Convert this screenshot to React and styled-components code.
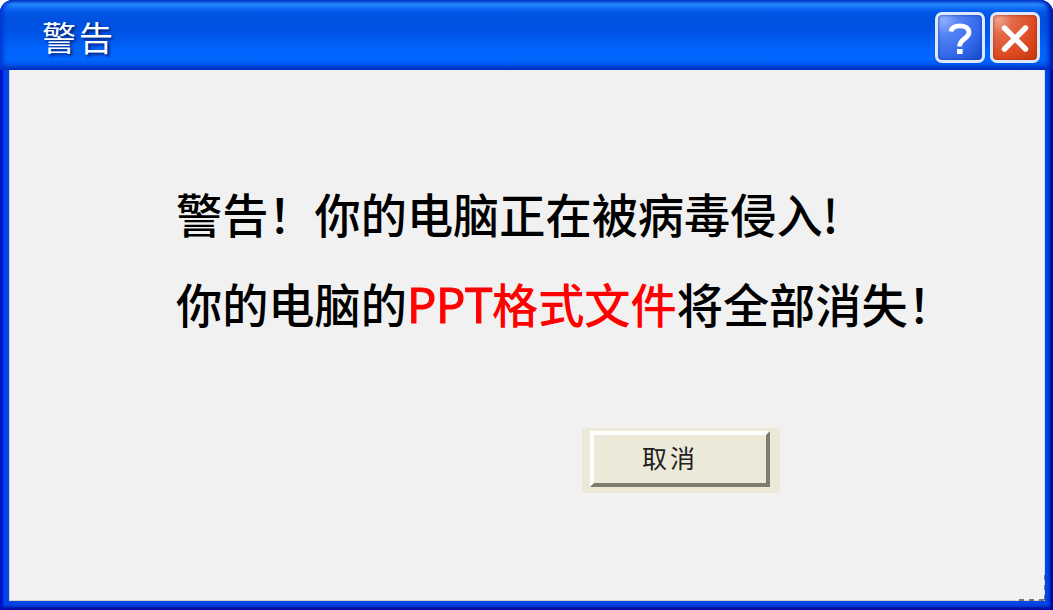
import React from 'react'
import styled, { createGlobalStyle } from 'styled-components'

const App = () => {
    return (
        <>
            <GlobalStyle />
            <Window>
                <TitleBar>
                    <Title>警告</Title>
                    <Controls>
                        <ControlButton $kind="help" aria-label="help">
                            <svg width="44" height="44" viewBox="0 0 44 44" fill="none">
                                <path d="M13 15.5C13.5 12 17 9.8 21.5 9.8C27 9.8 31 12.3 31 16.6C31 22.6 21.6 22.6 21.6 30.5" stroke="#fff" strokeWidth="4.8" />
                                <rect x="19" y="33" width="5.6" height="5" fill="#fff" />
                            </svg>
                        </ControlButton>
                        <ControlButton $kind="close" aria-label="close">
                            <svg width="44" height="44" viewBox="0 0 44 44" fill="none">
                                <path d="M11.5 12L32.5 33M32.5 12L11.5 33" stroke="#fff" strokeWidth="5.4" strokeLinecap="round" />
                            </svg>
                        </ControlButton>
                    </Controls>
                </TitleBar>
                <Content>
                    <Message>警告！你的电脑正在被病毒侵入!</Message>
                    <Message>你的电脑的<Danger><Latin>PPT</Latin>格式文件</Danger>将全部消失！</Message>
                    <ButtonFrame>
                        <CancelButton>取消</CancelButton>
                    </ButtonFrame>
                    <ResizeGrip />
                </Content>
            </Window>
        </>
    )
}

export default App

const GlobalStyle = createGlobalStyle`
* {
box-sizing : border-box;
}
body {
margin : 0;
background-color : #fff;
overflow : hidden;
}
`
const Window = styled.div`
display : flex;
flex-direction : column;
width : 1053px;
height : 610px;
padding : 0 8px 9px 9px;
border-radius : 13px 13px 0 0;
background-color : #0046e8;
box-shadow : inset 3px 0 2px #0010c8, inset -3px 0 3px #0008a0, inset 0 -3px 3px #000c96;
`
const TitleBar = styled.div`
display : flex;
justify-content : space-between;
align-items : flex-start;
flex-shrink : 0;
height : 70px;
margin : 0 -8px 0 -9px;
padding : 12px 13px 0 42px;
border-radius : 13px 13px 0 0;
background : linear-gradient(180deg, #0757dc 0, #2b8cff 4px, #1673fa 7px, #0058e8 12px, #0050df 20px, #0055e8 34px, #0062fb 48px, #0067ff 59px, #0058ef 64px, #003fd3 68px, #0036c0 70px);
box-shadow : inset 3px 0 4px #0036d2, inset -4px 0 4px #0018a8;
`
const Title = styled.div`
font-family : "Noto Sans CJK SC", sans-serif;
font-size : 34px;
line-height : 50px;
letter-spacing : 3px;
color : #fff;
text-shadow : 2px 2px 3px #001c6c;
`
const Controls = styled.div`
display : flex;
gap : 5px;
`
const ControlButton = styled.button`
display : flex;
justify-content : center;
align-items : center;
width : 50px;
height : 51px;
padding : 0;
border : 3px solid #dfe8fb;
border-radius : 7px;
background : ${({ $kind }) => $kind === 'close'
        ? 'radial-gradient(circle at 12% 10%, #f0a28c 0, #e36b4a 25%, #dc4a22 65%, #c63605 100%)'
        : 'radial-gradient(circle at 12% 10%, #91aff9 0, #5583f4 28%, #3268eb 65%, #1448c9 100%)'};
box-shadow : inset 0 0 3px ${({ $kind }) => $kind === 'close' ? '#a52f10' : '#133fae'};
`
const Content = styled.div`
position : relative;
display : flex;
flex-direction : column;
flex : 1;
padding : 98px 0 0 167px;
background-color : #f1f1f1;
box-shadow : inset 1px 0 0 #d8d4c5, inset 0 -1px 0 #d8d4c5, inset -1px 0 0 #d0dcf2;
`
const Message = styled.div`
height : 90px;
font-family : "Noto Sans CJK SC", sans-serif;
font-size : 46.2px;
font-weight : 500;
line-height : 90px;
white-space : nowrap;
color : #000;
`
const Danger = styled.span`
color : #f00;
`
const Latin = styled.span`
font-family : "Open Sans", "Noto Sans", sans-serif;
font-size : 49px;
font-weight : 500;
line-height : 1;
letter-spacing : -0.3px;
-webkit-text-stroke : 1.2px #f00;
`
const ButtonFrame = styled.div`
width : 198px;
height : 65px;
margin : 80px 0 0 406px;
padding : 3px 10px 6px 8px;
background-color : #ece9d8;
`
const CancelButton = styled.button`
display : block;
width : 180px;
height : 56px;
padding : 0 20px 4px 0;
border : 4px solid;
border-color : #fff #7e7c6c #7e7c6c #fff;
background-color : #ece9d8;
font-family : "Noto Sans CJK SC", sans-serif;
font-size : 25px;
line-height : 44px;
letter-spacing : 3px;
color : #222;
`
const ResizeGrip = styled.div`
position : absolute;
right : 0;
bottom : 0;
width : 26px;
height : 26px;
background :
repeating-linear-gradient(90deg, #77776f 0 5px, transparent 5px 10px) left bottom / 26px 2px no-repeat,
repeating-linear-gradient(180deg, #77776f 0 5px, transparent 5px 10px) right top / 1px 26px no-repeat;
`
